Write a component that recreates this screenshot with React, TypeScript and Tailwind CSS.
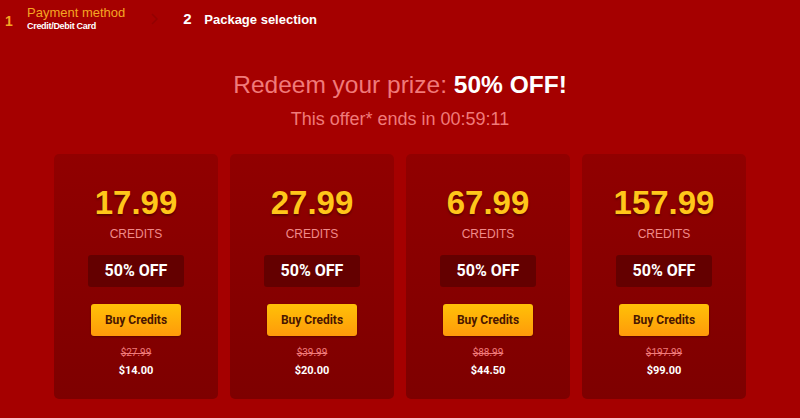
import React from "react";

const packages = [
  { credits: "17.99", was: "$27.99", now: "$14.00" },
  { credits: "27.99", was: "$39.99", now: "$20.00" },
  { credits: "67.99", was: "$88.99", now: "$44.50" },
  { credits: "157.99", was: "$197.99", now: "$99.00" },
];

function PackageCard({ credits, was, now }: { credits: string; was: string; now: string }) {
  return (
    <div className="w-[164px] h-[245px] rounded-[5px] bg-gradient-to-b from-[#910000] to-[#7e0000] flex flex-col items-center pt-[29px]">
      <div
        className="text-[33px] leading-[40px] font-bold text-[#ffc61a] font-['Liberation_Sans',Arial,sans-serif] [text-shadow:0_2px_2px_rgba(60,0,0,0.6)]"
      >
        {credits}
      </div>
      <div className="mt-[4px] text-[12px] leading-[14px] text-[#f08a8a] font-['Liberation_Sans',Arial,sans-serif]">
        CREDITS
      </div>
      <div className="mt-[14px] w-[96px] h-[32px] rounded-[3px] bg-[#640000] flex items-center justify-center text-white font-bold text-[16px] font-['Roboto',sans-serif]">
        50% OFF
      </div>
      <button className="mt-[17px] w-[90px] h-[32px] rounded-[3px] bg-gradient-to-b from-[#ffc107] to-[#ff9a0a] text-[#4a1600] font-bold text-[12px] font-['Roboto',sans-serif] shadow-[0_1px_2px_rgba(0,0,0,0.3)]">
        Buy Credits
      </button>
      <div className="mt-[11px] text-[10px] leading-[12px] text-[#f07a7a] line-through font-['Roboto',sans-serif]">
        {was}
      </div>
      <div className="mt-[5px] text-[11px] leading-[14px] text-white font-bold font-['Roboto',sans-serif]">
        {now}
      </div>
    </div>
  );
}

export default function App() {
  return (
    <div className="w-[800px] h-[418px] bg-[#a50000] font-['Liberation_Sans',Arial,sans-serif] overflow-hidden">
      <div className="flex items-start pl-[5px] pt-[5px] h-[40px]">
        <div className="text-[#f5a623] font-bold text-[14px] mt-[6px] w-[22px]">1</div>
        <div className="flex flex-col">
          <span className="text-[#f5a623] text-[13px] leading-[16px]">Payment method</span>
          <span className="text-white text-[9px] leading-[11px] font-bold tracking-[-0.3px]">Credit/Debit Card</span>
        </div>
        <svg className="ml-[26px] mt-[8px]" width="8" height="12" viewBox="0 0 8 12">
          <path d="M1 1l5 5-5 5" fill="none" stroke="#930000" strokeWidth="1.5" />
        </svg>
        <div className="ml-[24px] flex items-center mt-[3px]">
          <span className="text-white font-bold text-[15px] w-[21px]">2</span>
          <span className="text-white font-bold text-[13px]">Package selection</span>
        </div>
      </div>
      <div className="text-center mt-[30px]">
        <div className="text-[24.5px] leading-[30px] text-[#f07a7a]">
          Redeem your prize: <span className="text-white font-bold">50% OFF!</span>
        </div>
        <div className="text-[18px] leading-[22px] text-[#f07a7a] mt-[8px]">
          This offer* ends in 00:59:11
        </div>
      </div>
      <div className="flex justify-center gap-[12px] mt-[24px]">
        {packages.map((p) => (
          <PackageCard key={p.credits} {...p} />
        ))}
      </div>
    </div>
  );
}
